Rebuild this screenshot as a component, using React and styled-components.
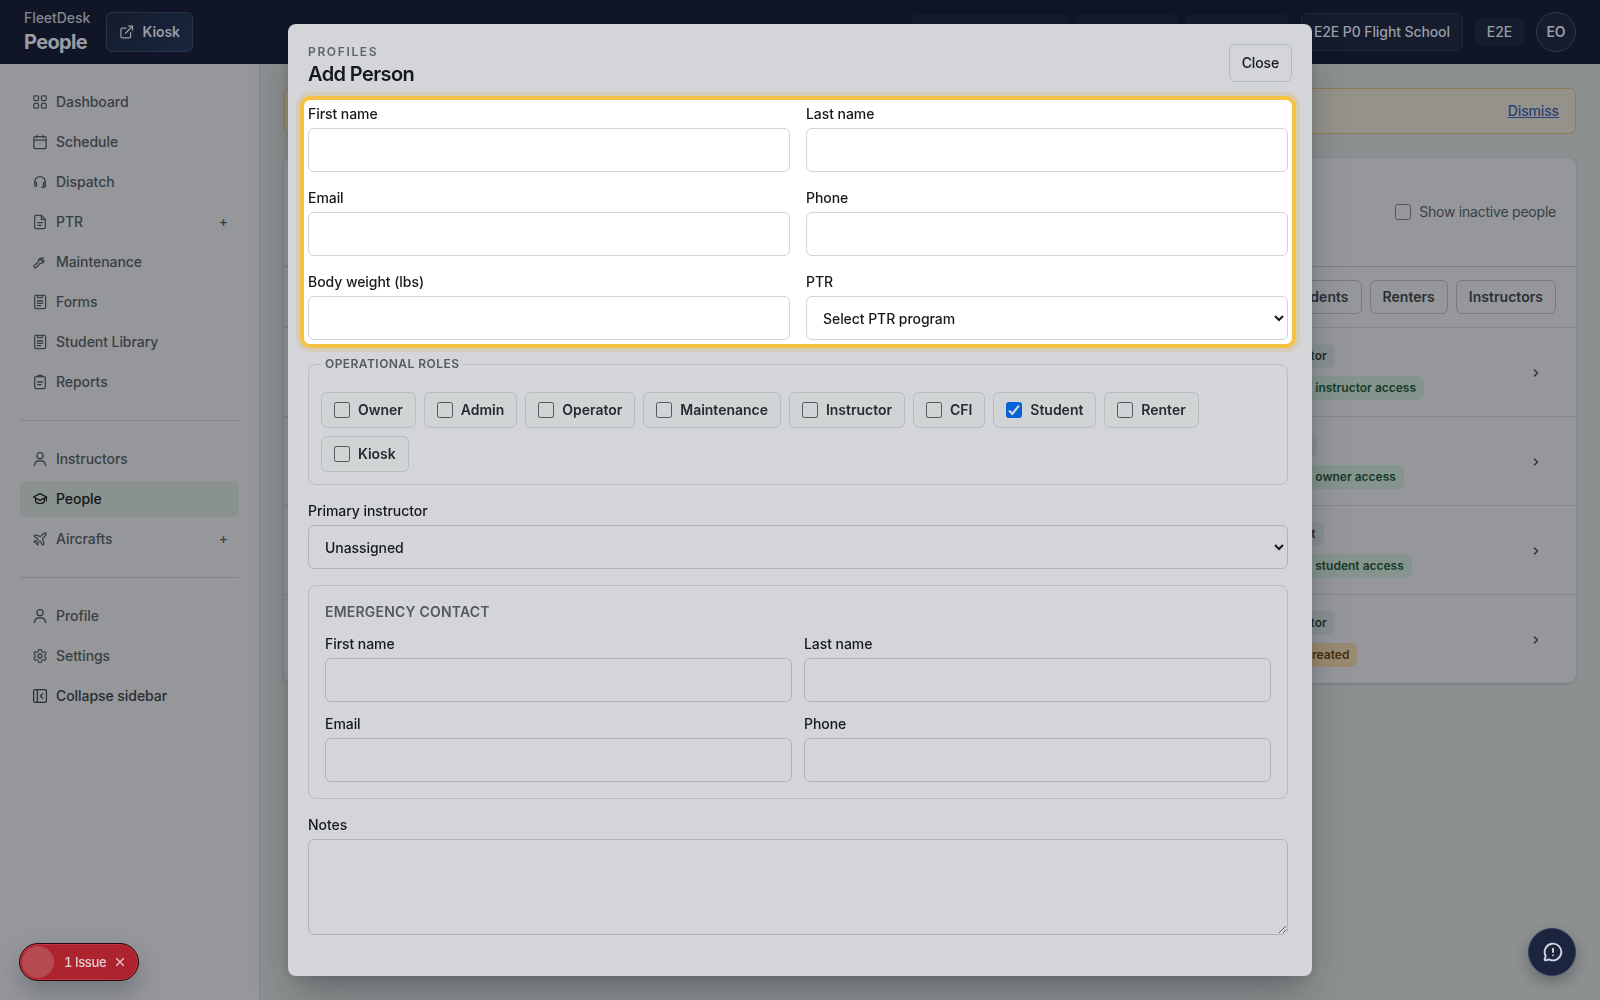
import styled, { createGlobalStyle, css } from 'styled-components';
import { useState } from 'react';
import { ChevronRight, ExternalLink, MessageCircleWarning, Settings, X } from 'lucide-react';

const GlobalStyle = createGlobalStyle`
    *, *::before, *::after { box-sizing: border-box; }
    body {
        margin: 0;
        height: 1000px;
        overflow: hidden;
        background: #8c9090;
        color: #16191c;
        font-family: Inter, "Liberation Sans", sans-serif;
        font-size: 14px;
        line-height: 20px;
        letter-spacing: -0.06px;
    }
    button, input, select, textarea { font: inherit; color: inherit; letter-spacing: inherit; }
`

// sidebar drawings, all on a 24 grid
const icons = {
    dashboard: <><rect x="2.8" y="2.8" width="7" height="7" rx="1.5" /><rect x="14.2" y="2.8" width="7" height="7" rx="1.5" /><rect x="2.8" y="14.2" width="7" height="7" rx="1.5" /><rect x="14.2" y="14.2" width="7" height="7" rx="1.5" /></>,
    schedule: <><rect x="2.8" y="4" width="18.4" height="17.8" rx="2" /><path d="M7.5 1.8v4M16.5 1.8v4M2.8 9.3h18.4" /></>,
    dispatch: <><path d="M4 14v-2a8 8 0 0 1 16 0v5a3 3 0 0 1-3 3h-2.5" /><path d="M4 12.5h1.5a1.5 1.5 0 0 1 1.5 1.5v3a1.5 1.5 0 0 1-3 0zM20 12.5h-1.5A1.5 1.5 0 0 0 17 14v3a1.5 1.5 0 0 0 3 0z" /></>,
    file: <><path d="M14 2H6a2 2 0 0 0-2 2v16a2 2 0 0 0 2 2h12a2 2 0 0 0 2-2V8z" /><path d="M14 2v6h6M8.5 13h7M8.5 17h5" /></>,
    wrench: <path transform="translate(-0.8 2) scale(0.88)" strokeWidth="2.2" d="M14.5 7.5a4.6 4.6 0 0 1 5.4-3l-3 3 .4 2.2 2.2.4 1.7-2a4.6 4.6 0 0 1-6.2 5.2l-6.6 6.9a2.3 2.3 0 0 1-3.4-3.2l7.1-6.2a4.6 4.6 0 0 1 2.4-5.3" />,
    form: <><rect x="4" y="2.2" width="16.4" height="19.6" rx="2" /><path d="M8.5 2.4v3h7v-3M8 10.5h8M8 14h8M8 17.5h5" /></>,
    report: <><rect x="4" y="4" width="16" height="18" rx="2" /><path d="M8.5 4V3a1 1 0 0 1 1-1h5a1 1 0 0 1 1 1v1M8.5 12h7M8.5 16h5" /></>,
    person: <><circle cx="12" cy="7" r="4.6" /><path d="M3.4 22a8.7 8.7 0 0 1 17.2 0" /></>,
    people: <><path d="M2.2 9 12 4l10 5-10 5z" /><path d="M5.5 11v5.5c3 3.2 10 3.2 13 0V11M21.5 9.4v5.4" /></>,
    plane: <path d="M17.8 19.2 16 11l3.5-3.5C21 6 21.5 4 21 3c-1-.5-3 0-4.5 1.5L13 8 4.8 6.2c-.5-.1-.9.1-1.1.5l-.3.5c-.2.5-.1 1 .3 1.3L9 12l-2 3H4l-1 1 3 2 2 3 1-1v-3l3-2 3.5 5.3c.3.4.8.5 1.3.2l.5-.2c.4-.3.6-.7.5-1.2z" />,
    collapse: <><rect x="2.4" y="2.4" width="19.2" height="19.2" rx="2.5" /><path d="M8 2.4v19.2M16 8.5 12.8 12l3.2 3.5" /></>,
};

const nav = [
    [
        { label: 'Dashboard', icon: 'dashboard' },
        { label: 'Schedule', icon: 'schedule' },
        { label: 'Dispatch', icon: 'dispatch' },
        { label: 'PTR', icon: 'file', more: true },
        { label: 'Maintenance', icon: 'wrench' },
        { label: 'Forms', icon: 'form' },
        { label: 'Student Library', icon: 'form' },
        { label: 'Reports', icon: 'report' },
    ],
    [
        { label: 'Instructors', icon: 'person' },
        { label: 'People', icon: 'people', active: true },
        { label: 'Aircrafts', icon: 'plane', more: true },
    ],
    [
        { label: 'Profile', icon: 'person' },
        { label: 'Settings', icon: 'settings' },
        { label: 'Collapse sidebar', icon: 'collapse', dark: true },
    ],
];

const people = [
    { role: 'Instructor', access: 'Linked: instructor access' },
    { role: 'Owner', access: 'Linked: owner access' },
    { role: 'Student', access: 'Linked: student access' },
    { role: 'Instructor', access: 'Login created', pending: true },
];

const roles = ['Owner', 'Admin', 'Operator', 'Maintenance', 'Instructor', 'CFI', 'Student', 'Renter', 'Kiosk'];

function NavIcon({ name }) {
    if (name === 'settings') {
        return <Settings size={16} strokeWidth={1.9} />
    }
    return (
        <svg width="16" height="16" viewBox="0 0 24 24" fill="none" stroke="currentColor" strokeWidth="1.9" strokeLinecap="round" strokeLinejoin="round">
            {icons[name]}
        </svg>
    )
}

function TextField({ label }) {
    return (
        <Field>
            <span>{label}</span>
            <Input type="text" />
        </Field>
    )
}

function AddPerson() {
    const [selected, setSelected] = useState(['Student']);

    function toggleRole(role) {
        setSelected(selected.includes(role) ? selected.filter((r) => r !== role) : [...selected, role]);
    }

    return (
        <Modal role="dialog">
            <ModalHead>
                <div>
                    <Eyebrow>PROFILES</Eyebrow>
                    <ModalTitle>Add Person</ModalTitle>
                </div>
                <CloseButton>Close</CloseButton>
            </ModalHead>
            <Spotlight>
                <Grid $gap="16px">
                    <TextField label="First name" />
                    <TextField label="Last name" />
                    <TextField label="Email" />
                    <TextField label="Phone" />
                    <TextField label="Body weight (lbs)" />
                    <Field>
                        <span>PTR</span>
                        <Select $lit><option>Select PTR program</option></Select>
                    </Field>
                </Grid>
            </Spotlight>
            <Body>
                <Roles>
                    <legend>OPERATIONAL ROLES</legend>
                    <Chips>
                        {roles.map((role) =>
                            <Chip key={role}>
                                <CheckInput type="checkbox" checked={selected.includes(role)} onChange={() => toggleRole(role)} />
                                {role}
                            </Chip>
                        )}
                    </Chips>
                </Roles>
                <Field>
                    <span>Primary instructor</span>
                    <Select><option>Unassigned</option></Select>
                </Field>
                <Emergency>
                    <h3>EMERGENCY CONTACT</h3>
                    <Grid $gap="12px">
                        <TextField label="First name" />
                        <TextField label="Last name" />
                        <TextField label="Email" />
                        <TextField label="Phone" />
                    </Grid>
                </Emergency>
                <Field>
                    <span>Notes</span>
                    <Notes />
                </Field>
            </Body>
        </Modal>
    )
}

function App() {
    return (
        <>
            <GlobalStyle />
            <Header>
                <Brand>
                    <small>FleetDesk</small>
                    <strong>People</strong>
                </Brand>
                <KioskButton><ExternalLink size={16} strokeWidth={1.9} /> Kiosk</KioskButton>
                <HeaderRight>
                    <Status $width="157px" />
                    <Status $width="102px" />
                    <Status $width="104px" />
                    <School>E2E P0 Flight School</School>
                    <Tag>E2E</Tag>
                    <Avatar>EO</Avatar>
                </HeaderRight>
            </Header>
            <Shell>
                <Sidebar>
                    {nav.map((group, index) =>
                        <NavGroup key={index}>
                            {group.map((item) =>
                                <NavItem key={item.label} $active={item.active} $dark={item.dark}>
                                    <NavIcon name={item.icon} />
                                    {item.label}
                                    {item.more && <Plus>+</Plus>}
                                </NavItem>
                            )}
                        </NavGroup>
                    )}
                </Sidebar>
                <Main>
                    <Banner><a>Dismiss</a></Banner>
                    <Card>
                        <CardHead>
                            <Inactive><CheckInput type="checkbox" /> Show inactive people</Inactive>
                        </CardHead>
                        <Filters>
                            <Filter>Students</Filter>
                            <Filter>Renters</Filter>
                            <Filter>Instructors</Filter>
                        </Filters>
                        {people.map((person, index) =>
                            <PersonRow key={index}>
                                <Badges>
                                    <Badge>{person.role}</Badge>
                                    <Badge $tone={person.pending ? 'amber' : 'green'}>{person.access}</Badge>
                                </Badges>
                                <ChevronRight size={12} strokeWidth={3.2} />
                            </PersonRow>
                        )}
                    </Card>
                </Main>
            </Shell>
            <Overlay>
                <AddPerson />
            </Overlay>
            <Issue>
                <IssueDot />
                <span>1 Issue</span>
                <X size={14} strokeWidth={2} />
            </Issue>
            <Feedback><MessageCircleWarning size={20} strokeWidth={2.3} /></Feedback>
        </>
    )
}

export default App;


const Header = styled.header`
    display: flex;
    align-items: center;
    height: 64px;
    padding: 0 24px;
    background: #101627;
    color: #9a9da5;
`

const Brand = styled.div`
    display: flex;
    flex-direction: column;
    width: 66px;
    margin-right: 16px;

    small { font-size: 14px; font-weight: 500; line-height: 20px; color: #82868f; }
    strong { font-size: 20px; font-weight: 700; line-height: 28px; letter-spacing: -0.65px; }
`

const KioskButton = styled.button`
    display: flex;
    align-items: center;
    gap: 8px;
    width: 87px;
    height: 40px;
    padding: 0 12px;
    border: 1px solid #27324a;
    border-radius: 6px;
    background: linear-gradient(135deg, #141c2e, #1a263c);
    font-weight: 600;
`

const HeaderRight = styled.div`
    display: flex;
    align-items: center;
    margin-left: auto;
`

const Status = styled.span`
    width: ${({ $width }) => $width};
    height: 36px;
    margin-right: 7px;
    border-radius: 6px;
    background: #141b2c;
`

const School = styled.span`
    width: 162px;
    margin: 0 12px 0 5px;
    padding: 8px 12px;
    border: 1px solid #20283a;
    border-radius: 6px;
    background: #151c2e;
    font-weight: 500;
    letter-spacing: -0.1px;
    white-space: nowrap;
`

const Tag = styled.span`
    width: 49px;
    margin-right: 12px;
    padding: 4px 0;
    border-radius: 6px;
    background: #151c2e;
    font-weight: 500;
    text-align: center;
`

const Avatar = styled.span`
    display: grid;
    place-items: center;
    width: 40px;
    height: 40px;
    border: 1px solid #323949;
    border-radius: 50%;
    background: #151c2e;
    font-weight: 600;
`

const Shell = styled.div`
    display: flex;
    height: 936px;
`

const Sidebar = styled.aside`
    width: 260px;
    padding: 20px;
    border-right: 1px solid #85888b;
    background: #95979b;
`

const NavGroup = styled.nav`
    display: flex;
    flex-direction: column;
    gap: 4px;

    & + & {
        margin-top: 20px;
        padding-top: 20px;
        border-top: 1px solid #838689;
    }
`

const NavItem = styled.a`
    display: flex;
    align-items: center;
    gap: 8px;
    height: 36px;
    padding: 0 12px;
    border-radius: 6px;
    color: #3a3f43;
    font-weight: 500;

    ${({ $dark }) => $dark && css`color: #282d31;`}
    ${({ $active }) => $active && css`
        background: #8a9290;
        color: #121618;
    `}
`

const Plus = styled.span`
    margin: 0 -1px 0 auto;
`

const Main = styled.main`
    flex: 1;
    padding: 24px;
`

const Banner = styled.div`
    display: flex;
    align-items: center;
    justify-content: flex-end;
    height: 46px;
    padding: 0 16px;
    border: 1px solid #8f7c50;
    border-radius: 6px;
    background: #94928a;

    a {
        color: #2a4078;
        font-weight: 500;
        letter-spacing: -0.15px;
        text-decoration: underline;
    }
`

const Card = styled.section`
    margin-top: 24px;
    height: 525px;
    border-radius: 8px;
    background: #95979b;
    box-shadow: 0 1px 3px rgba(20, 24, 28, 0.2);
`

const CardHead = styled.div`
    display: flex;
    align-items: center;
    justify-content: flex-end;
    height: 109px;
    padding: 0 20px;
    border-bottom: 1px solid #7d8083;
`

const Inactive = styled.label`
    display: flex;
    align-items: center;
    gap: 8px;
    color: #3a3f43;
    letter-spacing: -0.22px;
`

const CheckInput = styled.input`
    appearance: none;
    width: 16px;
    height: 16px;
    margin: 0;
    border: 1px solid #53575c;
    border-radius: 2.5px;

    &:checked {
        border-color: #0562d6;
        background: #0562d6 url("data:image/svg+xml,%3Csvg xmlns='http://www.w3.org/2000/svg' viewBox='0 0 16 16'%3E%3Cpath d='M3 8.5 6.3 11.8 13 3.6' fill='none' stroke='%23d4d8e0' stroke-width='2.2'/%3E%3C/svg%3E") center / 16px;
    }
`

const Filters = styled.div`
    display: flex;
    justify-content: flex-end;
    gap: 8px;
    padding: 13px 20px;
    border-bottom: 1px solid #85888b;
`

const Filter = styled.button`
    height: 34px;
    padding: 0 12px;
    border: 1px solid #777a7e;
    border-radius: 6px;
    background: none;
    color: #2b3034;
    font-weight: 600;
    letter-spacing: 0.02px;
`

const PersonRow = styled.div`
    display: flex;
    align-items: center;
    justify-content: space-between;
    height: 89px;
    padding: 0 34px 0 978px;
    border-bottom: 1px solid #85888b;
    color: #34383c;

    svg { margin-top: 2px; }
    &:last-child { border-color: transparent; }
`

const Badges = styled.div`
    display: flex;
    flex-direction: column;
    align-items: flex-start;
    gap: 8px;
`

const tones = {
    green: 'background: #85958d; color: #173a2a;',
    amber: 'background: #9a8a72; color: #44300f;',
}

const Badge = styled.span`
    padding: 2px 8px;
    border-radius: 6px;
    background: #8a9191;
    color: #282d31;
    font-size: 12px;
    font-weight: 600;
    letter-spacing: 0;
    white-space: nowrap;
    ${({ $tone }) => tones[$tone]}
`

const Overlay = styled.div`
    position: fixed;
    inset: 0;
    display: grid;
    place-items: center;
`

const Modal = styled.div`
    width: 1024px;
    height: 952px;
    padding: 20px 20px 0 16px;
    border-radius: 8px;
    background: #d3d5d9;
    box-shadow: 0 20px 40px -8px rgba(15, 20, 30, 0.35), 0 4px 12px rgba(15, 20, 30, 0.08);
`

const ModalHead = styled.div`
    display: flex;
    align-items: flex-start;
    justify-content: space-between;
    height: 56px;
    padding-left: 4px;
`

const Eyebrow = styled.div`
    margin-bottom: 2px;
    padding-top: 1px;
    color: #5f6469;
    font-size: 12px;
    font-weight: 600;
    line-height: 13px;
    letter-spacing: 1.65px;
`

const ModalTitle = styled.h2`
    margin: 0;
    font-size: 20px;
    font-weight: 600;
    line-height: 28px;
    letter-spacing: -0.6px;
`

const CloseButton = styled.button`
    height: 38px;
    padding: 0 12px;
    border: 1px solid #b5bcbd;
    border-radius: 6px;
    background: none;
    font-weight: 500;
    letter-spacing: -0.15px;
`

const Spotlight = styled.div`
    width: 988px;
    height: 244px;
    padding: 4px;
    border-radius: 6px;
    background: #fff;
    box-shadow: 0 0 0 4px #f5c244, 0 0 0 8px #d5ccb9;
`

const Grid = styled.div`
    display: grid;
    grid-template-columns: 1fr 1fr;
    gap: ${({ $gap }) => $gap};
`

const Body = styled.div`
    display: flex;
    flex-direction: column;
    gap: 16px;
    width: 984px;
    padding: 12px 0 0 4px;
`

const Field = styled.label`
    display: flex;
    flex-direction: column;
    gap: 4px;
    font-weight: 500;
`

const Input = styled.input`
    width: 100%;
    height: 44px;
    padding: 0 12px;
    border: 1px solid #b0b4b7;
    border-radius: 6px;
    background: transparent;

    ${Spotlight} & { border-color: #d2d5d5; }
`

const Select = styled.select`
    width: 100%;
    height: 44px;
    padding: 0 12px;
    border: 1px solid ${({ $lit }) => $lit ? '#d2d5d5' : '#b0b4b7'};
    border-radius: 6px;
    background: transparent;
    font-weight: 500;
`

const Roles = styled.fieldset`
    min-width: 0;
    height: 129px;
    margin: 0;
    padding: 0 11px 12px;
    border: 1px solid #b9bdbf;
    border-radius: 8px;

    legend {
        margin-left: 1px;
        padding: 0 4px;
        color: #555a5f;
        font-size: 12px;
        font-weight: 600;
        line-height: 16px;
        letter-spacing: 0.45px;
    }
`

const Chips = styled.div`
    display: flex;
    flex-wrap: wrap;
    gap: 8px;
    padding: 20px 0 0 1px;
`

const Chip = styled.label`
    display: flex;
    align-items: center;
    gap: 8px;
    height: 36px;
    padding: 0 12px;
    border: 1px solid #b9bdbf;
    border-radius: 6px;
    background: #d1d4d5;
    color: #262c2f;
    font-weight: 600;
    letter-spacing: -0.02px;
`

const Emergency = styled.section`
    padding: 16px;
    border: 1px solid #b9bdbf;
    border-radius: 8px;

    h3 {
        margin: 0 0 12px;
        color: #555a5f;
        font-size: 14px;
        font-weight: 600;
        line-height: 20px;
        letter-spacing: 0.2px;
    }
`

const Notes = styled.textarea`
    display: block;
    width: 100%;
    height: 96px;
    border: 1px solid #b0b4b7;
    border-radius: 6px;
    background: transparent;
`

const Issue = styled.div`
    position: fixed;
    left: 19px;
    bottom: 19px;
    display: flex;
    align-items: center;
    width: 120px;
    height: 38px;
    padding-left: 2px;
    border: 1px solid #24080c;
    border-radius: 19px;
    background: #ad242e;
    box-shadow: inset 0 0 0 1px #c43540, 0 12px 24px rgba(20, 24, 30, 0.25);
    color: #e2d0d3;
    font-size: 13px;
    font-variant-numeric: tabular-nums;

    span { margin-right: 7px; font-weight: 500; letter-spacing: -0.4px; }
`

const IssueDot = styled.i`
    width: 32px;
    height: 32px;
    margin-right: 10px;
    border-radius: 50%;
    background: #b54a53;
`

const Feedback = styled.button`
    position: fixed;
    right: 24px;
    bottom: 24px;
    display: grid;
    place-items: center;
    width: 48px;
    height: 48px;
    padding: 0 0 0 1px;
    border: 1px solid #303b58;
    border-radius: 50%;
    background: #1b2540;
    box-shadow: 0 6px 14px rgba(20, 24, 30, 0.3);
    color: #d3d6dc;
`
